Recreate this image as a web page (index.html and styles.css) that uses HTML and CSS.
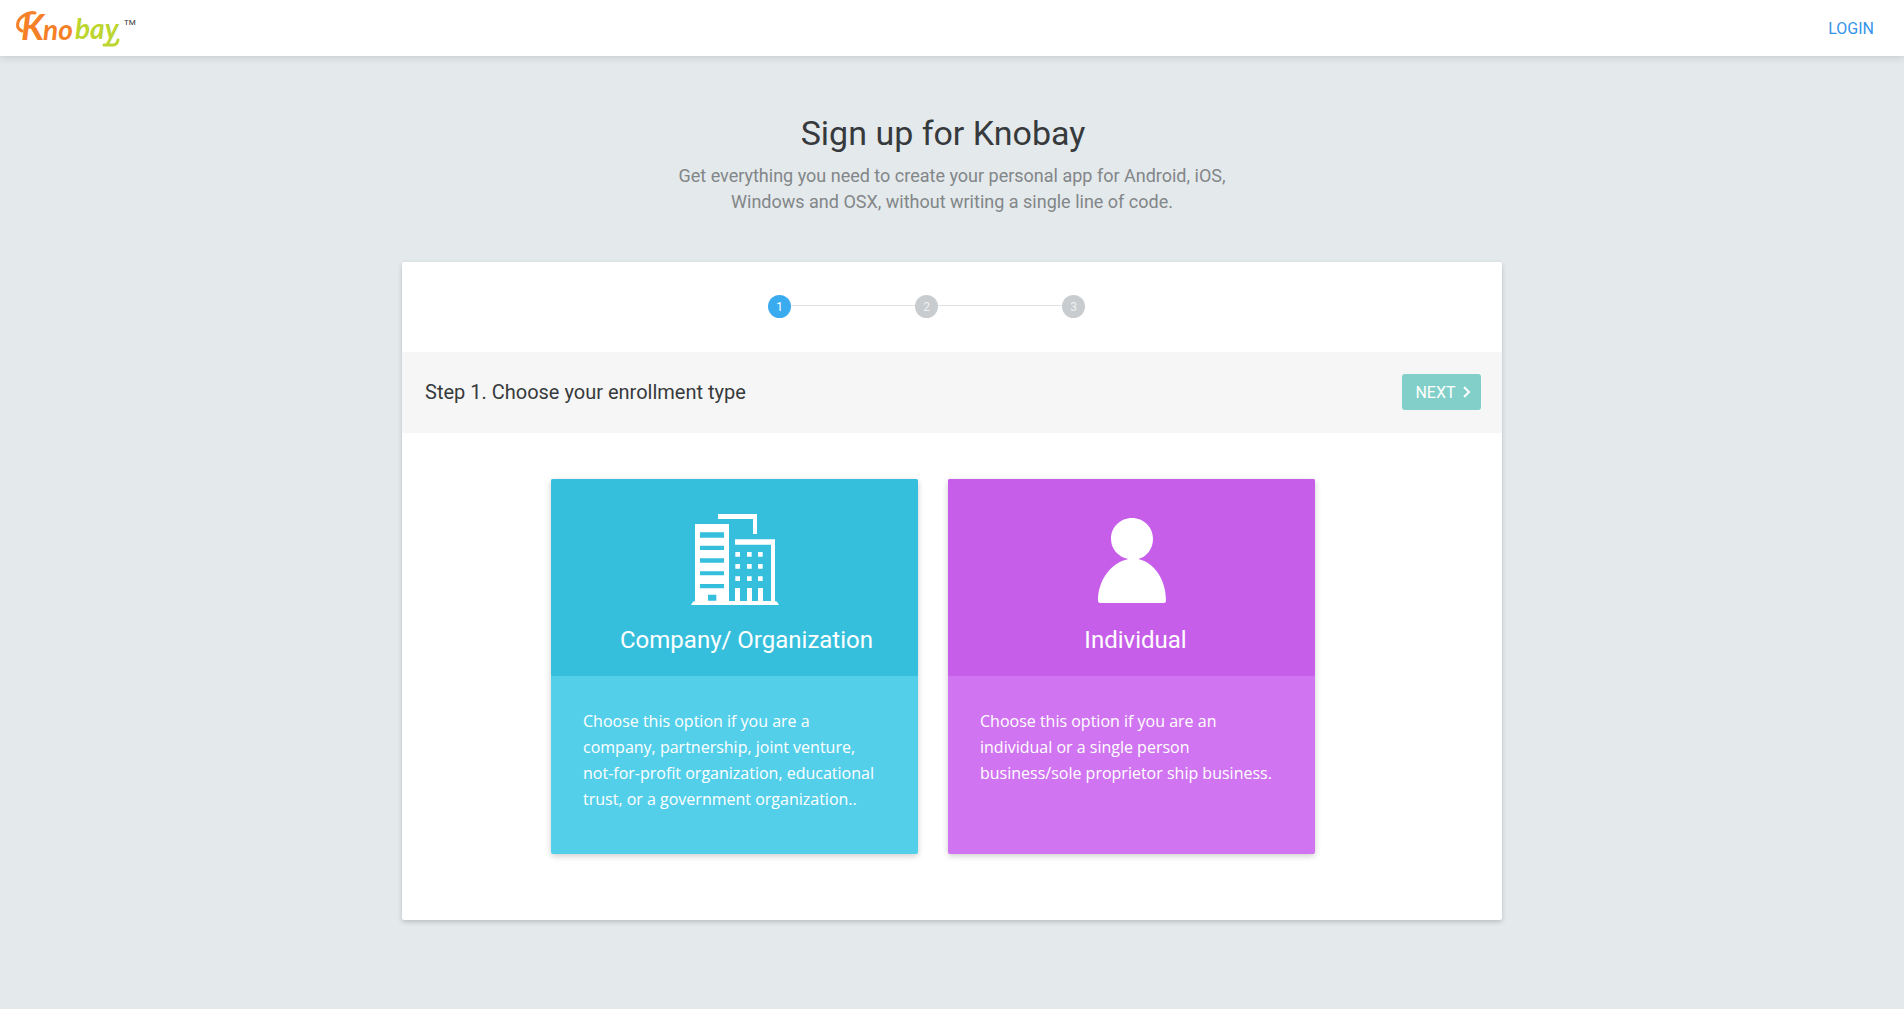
FILE: index.html
```html
<!DOCTYPE html>
<html lang="en">
<head>
<meta charset="utf-8">
<meta name="viewport" content="width=device-width, initial-scale=1">
<title>Sign up for Knobay</title>
<link rel="stylesheet" href="styles.css">
</head>
<body>
<header class="topbar">
  <a class="logo" href="#" aria-label="Knobay home">
    <svg width="126" height="56" viewBox="12 0 126 56">
      <path class="swash" d="M22 31C15 28 17 20 23 16C27 13 31 12 35 13"/>
      <text class="kno cap" x="21" y="40">K</text>
      <text class="kno low" x="43" y="40">no</text>
      <text class="bay low" x="75" y="39">bay</text>
      <path class="tail" d="M104 45H113Q117 45 118 40"/>
      <text class="tm" x="124" y="25">TM</text>
    </svg>
  </a>
  <a class="login" href="#">LOGIN</a>
</header>
<main class="page">
  <section class="intro">
    <h1>Sign up for Knobay</h1>
    <p>Get everything you need to create your personal app for Android, iOS,<br>Windows and OSX, without writing a single line of code.</p>
  </section>
  <section class="card">
    <ol class="steps">
      <li class="step active">1</li>
      <li class="step">2</li>
      <li class="step">3</li>
    </ol>
    <div class="band">
      <h2>Step 1. Choose your enrollment type</h2>
      <button class="next" type="button">NEXT
        <svg width="8" height="12" viewBox="0 0 8 12"><path d="M1 1l5 5-5 5"/></svg>
      </button>
    </div>
    <div class="options">
      <button class="tile company" type="button">
        <span class="tile-head">
          <span class="icon">
            <svg width="88" height="91" viewBox="453 132 264 273">
              <path fill-rule="evenodd" d="M465 162H567V393H585V354H600V393H621V354H636V393H654V354H669V393H693V224H585V208H705V393L711 395L717 405H453L459 395L465 393ZM480 187V203H552V187ZM480 227V240H552V227ZM480 265V278H552V265ZM480 304V316H552V304ZM480 342V355H552V342ZM504 374V392H529V374Z"/>
              <path d="M534 132H651V192H639V147H534Z"/>
              <path d="M586 246h14v14h-14zM621 246h14v14h-14zM654 246h14v14h-14zM586 282h14v14h-14zM621 282h14v14h-14zM654 282h14v14h-14zM586 319h14v14h-14zM621 319h14v14h-14zM654 319h14v14h-14z"/>
            </svg>
          </span>
          <span class="tile-title">Company/ Organization</span>
        </span>
        <span class="tile-body">Choose this option if you are a company, partnership, joint venture, not-for-profit organization, educational trust, or a government organization..</span>
      </button>
      <button class="tile individual" type="button">
        <span class="tile-head">
          <span class="icon">
            <svg width="68" height="85" viewBox="474 144 204 255">
              <path d="M576 144C611 144 639 171 639 206C639 237 620 260 595 267C645 279 678 331 678 392Q678 399 671 399H481Q474 399 474 392C474 331 512 279 565 267C534 260 513 237 513 206C513 171 541 144 576 144Z"/>
            </svg>
          </span>
          <span class="tile-title">Individual</span>
        </span>
        <span class="tile-body">Choose this option if you are an individual or a single person business/sole proprietor ship business.</span>
      </button>
    </div>
  </section>
</main>
</body>
</html>
```
FILE: styles.css
```css
* { box-sizing: border-box; }

body {
  margin: 0;
  min-height: 100vh;
  background: #e4e9ec;
  color: #373a3c;
  font-family: Roboto, sans-serif;
}

h1, h2, p, ol { margin: 0; padding: 0; font-weight: 400; }

button { border: 0; padding: 0; font: inherit; color: #fff; cursor: pointer; }

.topbar {
  display: flex;
  align-items: center;
  justify-content: space-between;
  height: 56px;
  padding: 0 30px 0 12px;
  background: #fff;
  box-shadow: 0 1px 8px rgba(0, 0, 0, .15);
}

.logo svg { display: block; }
.logo text { font-family: Lato, sans-serif; font-style: italic; font-weight: 700; }
.logo .kno { fill: #f58027; }
.logo .bay { fill: #bdd62f; }
.logo .cap { font-size: 36px; }
.logo .low { font-size: 28px; }
.logo .tm { font: 400 8px Roboto, sans-serif; fill: #333; }
.swash, .tail { fill: none; stroke-width: 3; stroke-linecap: round; }
.swash { stroke: #f58027; }
.tail { stroke: #bdd62f; }

.login { color: #3494ea; font-size: 16px; text-decoration: none; }

.page { padding: 55px 16px 88px; }

.intro { margin-bottom: 47px; text-align: center; }
.intro h1 { padding-right: 18px; font-size: 34px; line-height: 44px; }
.intro p { margin-top: 8px; color: #828688; font-size: 18px; line-height: 26px; }

.card {
  max-width: 1100px;
  min-height: 658px;
  margin: 0 auto;
  overflow: hidden;
  background: #fff;
  border-radius: 2px;
  box-shadow: 0 2px 5px rgba(0, 0, 0, .18);
}

.steps {
  display: flex;
  justify-content: center;
  align-items: center;
  gap: 124px;
  height: 90px;
  padding: 0 51px 2px 0;
  list-style: none;
}
.step {
  width: 23px;
  height: 23px;
  border-radius: 50%;
  background: #c8cccf;
  color: #eef0f1;
  font-size: 12px;
  line-height: 24px;
  text-align: center;
}
.step.active { background: #3babf0; color: #fff; }
.step + .step::before {
  content: "";
  float: left;
  width: 124px;
  height: 1px;
  margin: 10px 0 0 -124px;
  background: #dfe3e5;
}

.band {
  display: flex;
  align-items: center;
  justify-content: space-between;
  height: 81px;
  padding: 0 21px 2px 23px;
  background: #f6f6f6;
}
.band h2 { font-size: 20px; }

.next {
  display: flex;
  align-items: center;
  justify-content: center;
  gap: 7px;
  width: 79px;
  height: 36px;
  padding: 1px 0 0 3px;
  border-radius: 3px;
  background: #81cfc8;
  font-size: 16px;
}
.next svg { fill: none; stroke: #fff; stroke-width: 2; }

.options {
  display: flex;
  flex-wrap: wrap;
  justify-content: center;
  gap: 30px;
  padding: 46px 38px 66px 0;
}

.tile {
  display: flex;
  flex-direction: column;
  width: 367px;
  min-height: 375px;
  border-radius: 2px;
  overflow: hidden;
  box-shadow: 0 2px 6px rgba(0, 0, 0, .2);
  text-align: left;
}
.tile-head {
  display: flex;
  flex-direction: column;
  align-items: center;
  gap: 16px;
  width: 100%;
  height: 197px;
  padding-top: 32px;
  border-radius: 0 0 2px 2px;
}
.icon { display: flex; align-items: center; height: 98px; }
.icon svg { fill: #fff; }
.company .icon { padding-bottom: 2px; }
.tile-title { font-size: 24px; line-height: 30px; }
.company .tile-title { padding-left: 24px; }
.individual .tile-title { padding-left: 8px; }
.tile-body {
  padding: 32px 40px 32px 32px;
  font-family: "Open Sans", sans-serif;
  font-size: 16px;
  line-height: 26px;
}

.company { background: #54cfea; }
.company .tile-head { background: #35bfdd; }
.individual { background: #d174f1; }
.individual .tile-head { background: #c65eea; }
```
